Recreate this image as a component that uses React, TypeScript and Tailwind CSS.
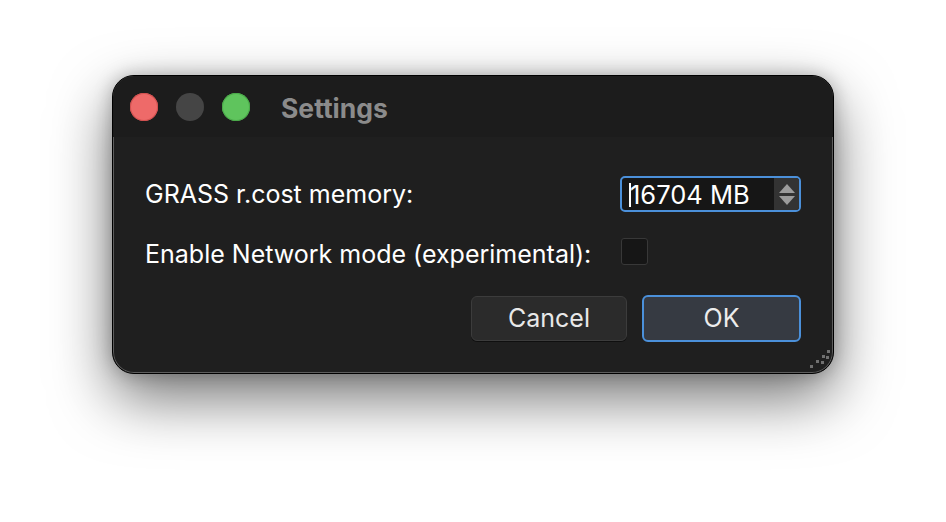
import { useState } from 'react';

const FONT = { fontFamily: 'Inter, "Noto Sans", "Liberation Sans", sans-serif' };

function TrafficLights() {
  return (
    <div className="flex items-center gap-[18px]">
      <span className="size-[28px] rounded-full bg-[#ee6a69] ring-1 ring-inset ring-[#d2504f]" />
      <span className="size-[28px] rounded-full bg-[#454545]" />
      <span className="size-[28px] rounded-full bg-[#5fc45d] ring-1 ring-inset ring-[#4aa949]" />
    </div>
  );
}

function SpinBox({ value }: { value: string }) {
  return (
    <div className="flex h-[36px] w-[181px] overflow-hidden rounded-[5px] border-2 border-[#4b90da] bg-[#161616]">
      <div className="relative flex flex-1 items-center pl-[8px] text-[25.5px] leading-none text-white">
        <span className="absolute left-[7px] top-[5px] h-[24px] w-[1.5px] bg-white" />
        <span className="pt-px">{value}</span>
      </div>
      <div className="flex w-[25px] flex-col items-center justify-center gap-[3px] bg-[#333333]">
        <svg width="16" height="9" viewBox="0 0 16 9" aria-hidden>
          <path d="M8 0 L16 9 L0 9 Z" fill="#9c9c9c" />
        </svg>
        <svg width="16" height="9" viewBox="0 0 16 9" aria-hidden>
          <path d="M0 0 L16 0 L8 9 Z" fill="#9c9c9c" />
        </svg>
      </div>
    </div>
  );
}

// dots of the corner resize grip, as [right, bottom] offsets from the window edge
const GRIP_DOTS = [
  [3, 20],
  [8, 15],
  [14, 10],
  [20, 5],
  [4, 14],
  [9, 9],
];

function ResizeGrip() {
  return (
    <>
      {GRIP_DOTS.map(([r, b]) => (
        <span
          key={`${r}-${b}`}
          className="pointer-events-none absolute size-[3px] bg-[#707070]"
          style={{ right: r, bottom: b }}
        />
      ))}
    </>
  );
}

export default function App() {
  const [network, setNetwork] = useState(false);

  return (
    <div className="flex h-[522px] w-[946px] justify-center bg-white pt-[75px]" style={FONT}>
      <div className="relative flex h-[299px] w-[722px] flex-col overflow-hidden rounded-[22px] border border-[#000000] bg-[#1f1f1f] shadow-[0_24px_60px_rgba(0,0,0,0.55),0_0_18px_rgba(0,0,0,0.25),inset_0_0_0_1px_rgba(255,255,255,0.28)]">
        {/* title bar */}
        <div className="flex h-[61px] shrink-0 items-center bg-[#1c1c1c] pl-[17px]">
          <TrafficLights />
          <span className="ml-[31px] mt-[4px] text-[26.5px] font-bold text-[#8b8b8b]">Settings</span>
        </div>

        {/* body */}
        <div className="flex flex-1 flex-col px-[32px] pt-[39px]">
          <div className="flex h-[36px] items-center justify-between">
            <span className="text-[25px] leading-none text-white">GRASS r.cost memory:</span>
            <SpinBox value="16704 MB" />
          </div>

          <div className="mt-[26px] flex h-[27px] items-center">
            <span className="w-[476px] pt-[6px] text-[25px] leading-none text-white">
              Enable Network mode (experimental):
            </span>
            <button
              type="button"
              onClick={() => setNetwork((v) => !v)}
              className="size-[27px] rounded-[3px] border border-[#383838] bg-[#161616]"
              aria-pressed={network}
            />
          </div>

          <div className="mt-[30px] flex h-[47px] items-center justify-end gap-[15px]">
            <button
              type="button"
              className="h-[45px] w-[156px] rounded-[6px] border border-[#3c3c3c] bg-[#2b2b2b] text-[25px] leading-none text-[#e8e8e8] shadow-[0_1px_0_rgba(0,0,0,0.5)]"
            >
              Cancel
            </button>
            <button
              type="button"
              className="h-[47px] w-[159px] rounded-[6px] border-2 border-[#4b90da] bg-[#363a42] text-[25px] leading-none text-[#ececec]"
            >
              OK
            </button>
          </div>
        </div>
        <ResizeGrip />
      </div>
    </div>
  );
}
